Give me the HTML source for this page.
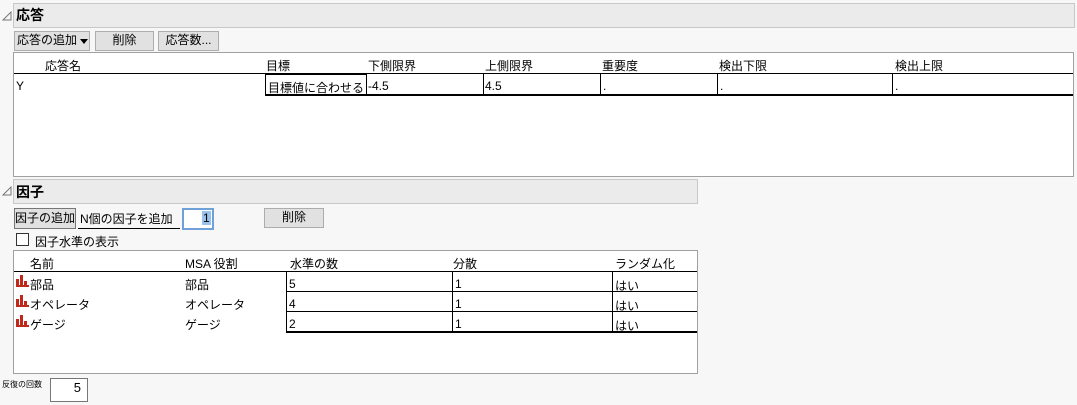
<!DOCTYPE html>
<html><head><meta charset="utf-8"><style>
body{margin:0;width:1077px;height:405px;background:#f7f7f7;position:relative;overflow:hidden;font-family:"Liberation Sans","Noto Sans CJK JP",sans-serif;font-size:12px;color:#000}
.a{position:absolute;white-space:nowrap}
.hdr{position:absolute;background:#ebebeb;border:1px solid #c8c8c8;box-sizing:border-box}
.ttl{position:absolute;font-weight:bold;font-size:14px}
.btn{position:absolute;background:#e1e1e1;border:1px solid #adadad;box-sizing:border-box;text-align:center;line-height:17px}
.box{position:absolute;background:#fff;border:1px solid #a0a0a0;box-sizing:border-box}
.hl{position:absolute;height:2px;background:#000}
.vl{position:absolute;width:1px;background:#000}
.ic{position:absolute;width:13px;height:12px}
</style></head><body>
<svg class="a" style="left:2px;top:11px" width="10" height="10"><path d="M9 1 L9 9 L1 9 Z" fill="none" stroke="#777" stroke-width="1"/></svg>
<div class="hdr" style="left:13px;top:3px;width:1062px;height:25px"></div>
<div class="ttl" style="left:16px;top:5px">応答</div>
<div class="btn" style="left:14px;top:31px;width:76px;height:20px;text-align:left;padding-left:2px">応答の追加</div>
<div class="a" style="left:80px;top:39px;width:0;height:0;border-left:4px solid transparent;border-right:4px solid transparent;border-top:5px solid #000"></div>
<div class="btn" style="left:95px;top:31px;width:59px;height:20px">削除</div>
<div class="btn" style="left:158px;top:31px;width:61px;height:20px">応答数...</div>
<div class="box" style="left:13px;top:52px;width:1061px;height:125px"></div>
<div class="a" style="left:45px;top:57px">応答名</div>
<div class="a" style="left:266px;top:57px">目標</div>
<div class="a" style="left:368px;top:57px">下側限界</div>
<div class="a" style="left:485px;top:57px">上側限界</div>
<div class="a" style="left:602px;top:57px">重要度</div>
<div class="a" style="left:719px;top:57px">検出下限</div>
<div class="a" style="left:895px;top:57px">検出上限</div>
<div class="hl" style="left:14px;top:73px;width:1059px;height:1px"></div>
<div class="hl" style="left:265px;top:94px;width:808px;height:2px"></div>
<div class="a" style="left:265px;top:74px;width:102px;height:21px;border:1px solid #000;box-sizing:border-box"></div>
<div class="vl" style="left:483px;top:74px;height:21px"></div>
<div class="vl" style="left:600px;top:74px;height:21px"></div>
<div class="vl" style="left:717px;top:74px;height:21px"></div>
<div class="vl" style="left:892px;top:74px;height:21px"></div>
<div class="a" style="left:16px;top:79px">Y</div>
<div class="a" style="left:268px;top:79px">目標値に合わせる</div>
<div class="a" style="left:368px;top:79px">-4.5</div>
<div class="a" style="left:485px;top:79px">4.5</div>
<div class="a" style="left:603px;top:79px">.</div>
<div class="a" style="left:720px;top:79px">.</div>
<div class="a" style="left:895px;top:79px">.</div>

<svg class="a" style="left:2px;top:186px" width="10" height="10"><path d="M9 1 L9 9 L1 9 Z" fill="none" stroke="#777" stroke-width="1"/></svg>
<div class="hdr" style="left:13px;top:179px;width:685px;height:25px"></div>
<div class="ttl" style="left:16px;top:182px">因子</div>
<div class="btn" style="left:14px;top:208px;width:62px;height:21px;line-height:18px;border-color:#777">因子の追加</div>
<div class="a" style="left:80px;top:210px">N個の因子を追加</div>
<div class="hl" style="left:78px;top:228px;width:102px;height:1px"></div>
<div class="a" style="left:182px;top:208px;width:32px;height:22px;border:2px solid #6fa0d8;box-sizing:border-box;background:#fff"></div>
<div class="a" style="left:202px;top:211px;background:#99c2ec;padding:0 1px">1</div>
<div class="btn" style="left:264px;top:208px;width:60px;height:20px">削除</div>
<div class="a" style="left:16px;top:233px;width:13px;height:13px;border:1px solid #333;background:#fff;box-sizing:border-box"></div>
<div class="a" style="left:35px;top:233px">因子水準の表示</div>
<div class="box" style="left:13px;top:250px;width:685px;height:124px"></div>
<div class="a" style="left:30px;top:255px">名前</div>
<div class="a" style="left:185px;top:255px">MSA 役割</div>
<div class="a" style="left:290px;top:255px">水準の数</div>
<div class="a" style="left:453px;top:255px">分散</div>
<div class="a" style="left:615px;top:255px">ランダム化</div>
<div class="hl" style="left:14px;top:271px;width:683px;height:1px"></div>
<div class="hl" style="left:286px;top:291px;width:411px;height:1px"></div>
<div class="hl" style="left:286px;top:311px;width:411px;height:1px"></div>
<div class="hl" style="left:286px;top:331px;width:411px;height:2px"></div>
<div class="vl" style="left:286px;top:272px;height:60px"></div>
<div class="vl" style="left:452px;top:272px;height:60px"></div>
<div class="vl" style="left:612px;top:272px;height:60px"></div>
<svg class="ic" style="left:16px;top:275px" viewBox="0 0 13 12"><path d="M0 12V4h3v8zM4 12V0h3v12zM8 12V6h3v6zM0 10h13v2H0z" fill="#c0281c"/></svg>
<svg class="ic" style="left:16px;top:295px" viewBox="0 0 13 12"><path d="M0 12V4h3v8zM4 12V0h3v12zM8 12V6h3v6zM0 10h13v2H0z" fill="#c0281c"/></svg>
<svg class="ic" style="left:16px;top:315px" viewBox="0 0 13 12"><path d="M0 12V4h3v8zM4 12V0h3v12zM8 12V6h3v6zM0 10h13v2H0z" fill="#c0281c"/></svg>
<div class="a" style="left:30px;top:276px">部品</div>
<div class="a" style="left:30px;top:296px">オペレータ</div>
<div class="a" style="left:30px;top:316px">ゲージ</div>
<div class="a" style="left:185px;top:276px">部品</div>
<div class="a" style="left:185px;top:296px">オペレータ</div>
<div class="a" style="left:185px;top:316px">ゲージ</div>
<div class="a" style="left:289px;top:277px">5</div>
<div class="a" style="left:289px;top:297px">4</div>
<div class="a" style="left:289px;top:317px">2</div>
<div class="a" style="left:455px;top:277px">1</div>
<div class="a" style="left:455px;top:297px">1</div>
<div class="a" style="left:455px;top:317px">1</div>
<div class="a" style="left:615px;top:277px">はい</div>
<div class="a" style="left:615px;top:297px">はい</div>
<div class="a" style="left:615px;top:317px">はい</div>

<div class="a" style="left:2px;top:379px;font-size:8px">反復の回数</div>
<div class="a" style="left:50px;top:378px;width:38px;height:24px;border:1px solid #777;background:#fff;box-sizing:border-box;text-align:right;padding-right:6px;line-height:18px;font-size:13px">5</div>
</body></html>
